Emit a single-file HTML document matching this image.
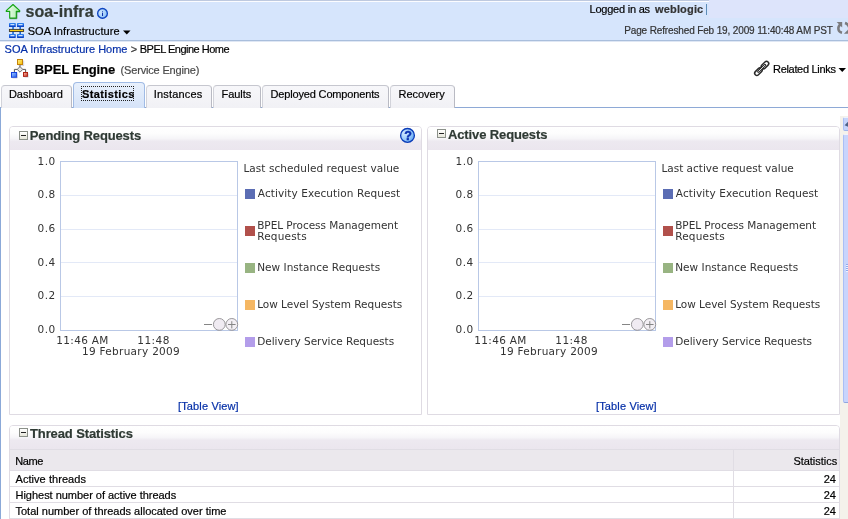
<!DOCTYPE html>
<html lang="en"><head><meta charset="utf-8"><title>BPEL Engine - Statistics</title>
<style>
html,body{margin:0;padding:0;background:#fff;}
body{width:848px;height:519px;overflow:hidden;position:relative;font:11px "Liberation Sans",sans-serif;}
.t{position:absolute;white-space:pre;-webkit-text-stroke:0.2px;}
#txt{position:absolute;left:0;top:0;width:848px;height:519px;will-change:transform;}
.abs{position:absolute;}
#hdr{left:0;top:0;width:848px;height:40px;background:#d6e5fc;border-bottom:1px solid #a9bedc;}
#hdrtop{left:0;top:0;width:709px;height:1px;background:#bec9df;}
#hdrtop2{left:0;top:1px;width:709px;height:1px;background:#fbfcff;}
#login{left:709px;top:0;width:139px;height:18px;background:#dde4fb;}
#hdrsh{left:0;top:41px;width:848px;height:1px;background:#dfe7f4;}
#vbar{left:706px;top:4px;width:1px;height:11px;background:#5d8db8;}
.tab{position:absolute;top:85px;height:23px;box-sizing:border-box;border:1px solid #c6c7cf;border-left-color:#d2d3da;border-right-color:#b9bac3;border-bottom:none;border-radius:4px 4px 0 0;background:linear-gradient(#f7f7fa,#f1f1f5);}
.tab.sel{top:82px;height:26px;border-color:#a0bbe5;background:linear-gradient(#e8f0fc,#d5e3f8);}
#tabline{left:0;top:107px;width:848px;height:1px;background:#8ea9d6;}
#leftline{left:0;top:107px;width:1px;height:412px;background:#8ba9d8;}
#focus{left:81px;top:86px;width:51px;height:13px;border:1px dotted #222;box-sizing:content-box;}
.panel{position:absolute;box-sizing:border-box;border:1px solid #dfdbe3;border-radius:4px 4px 0 0;background:#fff;}
.phdr{position:absolute;left:0;top:0;right:0;height:23px;border-radius:3px 3px 0 0;background:linear-gradient(#ffffff 0%,#fdfdfd 28%,#f6f5f8 50%,#ede9f0 62%,#ebe6ee 100%);}
.disc{position:absolute;width:9px;height:9px;box-sizing:border-box;border:1px solid #8b9089;background:linear-gradient(#fff,#e6e6da);}
.disc:after{content:"";position:absolute;left:1px;top:3px;width:5px;height:1px;background:#222;}
#thead{left:10px;top:450px;width:829px;height:20px;background:#ebe8ed;}
.hl{position:absolute;left:10px;width:829px;height:1px;background:#e0dde4;}
#colsep{left:733px;top:450px;width:1px;height:69px;background:#e0dde4;}
#sbtrack{left:840px;top:116px;width:8px;height:403px;background:#f4f2eb;}
#sbbtn{left:843px;top:117px;width:8px;height:14px;background:#c5d4fb;border-left:1px solid #a9bff5;border-top:1px solid #eef2fe;border-bottom:1px solid #9fb4ea;border-radius:2px 0 0 2px;box-sizing:border-box;}
#sbthumb{left:843px;top:134px;width:8px;height:269px;background:#c8d5fc;border-left:1px solid #a9bff5;border-top:1px solid #eef2fe;border-bottom:1px solid #8fa6e0;border-radius:2px 0 0 2px;box-sizing:border-box;}

</style></head>
<body>
<div class="abs" id="hdr"></div>
<div class="abs" id="hdrtop"></div>
<div class="abs" id="hdrtop2"></div>
<div class="abs" id="login"></div>
<div class="abs" id="hdrsh"></div>
<div class="abs" id="vbar"></div>

<div class="abs" id="tabline"></div>
<div class="abs" id="leftline"></div>
<div class="tab" style="left:1px;width:71px"></div>
<div class="tab sel" style="left:73px;width:72px"></div>
<div class="tab" style="left:146px;width:66px"></div>
<div class="tab" style="left:213px;width:48px"></div>
<div class="tab" style="left:262px;width:127px"></div>
<div class="tab" style="left:390px;width:65px"></div>
<div class="abs" id="focus"></div>

<div class="panel" style="left:9px;top:126px;width:413px;height:289px"><div class="phdr"></div><div class="disc" style="left:9px;top:4px"></div></div>
<div class="panel" style="left:427px;top:126px;width:413px;height:289px"><div class="phdr"></div><div class="disc" style="left:9px;top:2px"></div></div>
<div class="panel" style="left:9px;top:425px;width:831px;height:100px"><div class="phdr"></div><div class="disc" style="left:9px;top:2px"></div></div>
<div class="abs" id="thead"></div>
<div class="hl" style="top:449px"></div>
<div class="hl" style="top:470px"></div>
<div class="hl" style="top:486px"></div>
<div class="hl" style="top:502px"></div>
<div class="hl" style="top:518px"></div>
<div class="abs" id="colsep"></div>

<div class="abs" id="sbtrack"></div>
<div class="abs" id="sbbtn"></div>
<div class="abs" id="sbthumb"></div>

<svg class="abs" style="left:0;top:0;will-change:transform" width="848" height="519" viewBox="0 0 848 519">
<defs>
<linearGradient id="gArrow" x1="0" y1="0" x2="1" y2="0"><stop offset="0" stop-color="#f2fff2"/><stop offset="1" stop-color="#a8eaa8"/></linearGradient>
<radialGradient id="gInfo" cx="0.35" cy="0.4" r="0.8"><stop offset="0" stop-color="#d2e8fd"/><stop offset="1" stop-color="#7cbaf7"/></radialGradient>
<radialGradient id="gHelp" cx="0.3" cy="0.35" r="0.85"><stop offset="0" stop-color="#d2e8fd"/><stop offset="0.6" stop-color="#8fc4f9"/><stop offset="1" stop-color="#4f9af0"/></radialGradient>
<linearGradient id="gBox" x1="0" y1="0" x2="0" y2="1"><stop offset="0" stop-color="#2f84ee"/><stop offset="0.55" stop-color="#1a62e0"/><stop offset="1" stop-color="#0838c0"/></linearGradient>
<linearGradient id="gYel" x1="0" y1="0" x2="1" y2="1"><stop offset="0" stop-color="#fff08a"/><stop offset="1" stop-color="#f7bd00"/></linearGradient>
<linearGradient id="gBlu" x1="0" y1="0" x2="1" y2="1"><stop offset="0" stop-color="#a4ccff"/><stop offset="1" stop-color="#1f5cf0"/></linearGradient>
<linearGradient id="gRed" x1="0" y1="0" x2="1" y2="1"><stop offset="0" stop-color="#fbc0b0"/><stop offset="1" stop-color="#c42c1c"/></linearGradient>
<g id="chart">
  <rect x="60.5" y="161.5" width="177" height="169" fill="#fff" stroke="#b9c8e6" stroke-width="1"/>
  <path d="M61 195.5H237M61 229.5H237M61 262.5H237M61 296.5H237" stroke="#e3e9f7" stroke-width="1" fill="none"/>
  <path d="M204 324.5H212" stroke="#858585" stroke-width="1"/>
  <circle cx="219.3" cy="324.4" r="5.9" fill="#f0ebf2" stroke="#8e8c90" stroke-width="0.9"/>
  <circle cx="231.8" cy="324.4" r="5.9" fill="#f3eff4" stroke="#8e8c90" stroke-width="0.9"/>
  <path d="M228 324.5H235.6M231.8 321.2V328.4" stroke="#858585" stroke-width="1"/>
  <rect x="245" y="189" width="10" height="10" fill="#5b6db4"/>
  <rect x="245" y="226" width="10" height="10" fill="#b1504b"/>
  <rect x="245" y="263" width="10" height="10" fill="#98b482"/>
  <rect x="245" y="300" width="10" height="10" fill="#f5b763"/>
  <rect x="245" y="337" width="10" height="10" fill="#b39dea"/>
</g>
</defs>
<use href="#chart"/>
<use href="#chart" x="418"/>

<!-- green up arrow -->
<path d="M13 4.5 L19.7 10.6 L19.7 11.4 L16.3 11.4 L16.3 18.1 L9.7 18.1 L9.7 11.4 L6.3 11.4 L6.3 10.6 Z" fill="url(#gArrow)" stroke="#14a414" stroke-width="1.15" stroke-linejoin="round"/>
<path d="M16.95 11.9 V18.75 H9.6 M17 12.05 H20" fill="none" stroke="#0a6e0a" stroke-width="0.7" opacity="0.7"/>
<!-- info icon -->
<circle cx="102.5" cy="13.4" r="4.85" fill="url(#gInfo)" stroke="#0d44c0" stroke-width="1.35"/>
<text x="102.5" y="15.9" text-anchor="middle" font-family="Liberation Sans, sans-serif" font-weight="700" font-size="7.4" fill="#0a2fa8">i</text>
<rect x="101.2" y="11.85" width="2.6" height="0.8" fill="#b9d9fb"/>
<!-- soa infra icon -->
<g>
<path d="M13.05 26.5V34.5M20.2 26.5V34.5" stroke="#1a6ad8" stroke-width="1.6"/>
<rect x="9" y="23.1" width="6.8" height="3.9" rx="0.6" fill="url(#gBox)"/>
<rect x="17" y="23.1" width="7" height="3.9" rx="0.6" fill="url(#gBox)"/>
<rect x="9" y="34" width="6.8" height="3.9" rx="0.6" fill="url(#gBox)"/>
<rect x="17" y="34" width="7" height="3.9" rx="0.6" fill="url(#gBox)"/>
<path d="M10.4 24.7H14.4M18.4 24.7H22.6M10.4 35.6H14.4M18.4 35.6H22.6" stroke="#cfe2fc" stroke-width="1.3"/>
<rect x="9.4" y="29.4" width="14.2" height="2.1" fill="#fad21e" stroke="#3a3830" stroke-width="0.9"/>
</g>
<!-- dropdown arrows -->
<path d="M123 30.5H130.5L126.75 34.5Z" fill="#000"/>
<path d="M838.5 68H846L842.25 72Z" fill="#000"/>
<!-- refresh icon -->
<g fill="none" stroke="#7b7b7e" stroke-width="2.5">
<path d="M840.6 24.2 C837.2 27 837.6 31.6 842 32.7"/>
<path d="M845 23 C848 24 850 27 849 30"/>
</g>
<path d="M836.7 22H842.2V27.6Z" fill="#7b7b7e"/>
<path d="M843.9 33.8H849.5V28.2Z" fill="#7b7b7e"/>
<!-- bpel icon -->
<g>
<path d="M20 65V67M17.4 69.4H14.4V72M22.6 69.4H25.6V72" stroke="#5a5a5a" stroke-width="1" fill="none"/>
<path d="M20 66.6L22.8 69.4L20 72.2L17.2 69.4Z" fill="#e6e6e6" stroke="#606060" stroke-width="0.9"/>
<rect x="17.5" y="59.5" width="5" height="5" fill="url(#gYel)" stroke="#c58208" stroke-width="1"/>
<rect x="11.5" y="72.5" width="5.1" height="4.8" fill="url(#gBlu)" stroke="#1443e0" stroke-width="1"/>
<rect x="23.5" y="72.5" width="4" height="3.9" fill="url(#gRed)" stroke="#b02414" stroke-width="1"/>
<path d="M23.7 60.5V65.6H18.5M17.3 73.5V78H12.5M28.2 73.5V77.1H24.5" stroke="#8a8aa0" stroke-width="0.6" fill="none" opacity="0.6"/>
</g>
<!-- chain icon -->
<g transform="translate(761.7 68.4) rotate(-45)">
<rect x="-9" y="-2.2" width="8.7" height="4.4" rx="2.2" fill="#fdfdfd" stroke="#2a2a2a" stroke-width="1.5"/>
<rect x="0.3" y="-2.2" width="8.7" height="4.4" rx="2.2" fill="#fdfdfd" stroke="#2a2a2a" stroke-width="1.5"/>
<path d="M-4.6 0H4.6" stroke="#2a2a2a" stroke-width="2.5" stroke-linecap="round"/>
<path d="M-4.3 0H4.3" stroke="#fafafa" stroke-width="0.9" stroke-linecap="round"/>
</g>
<!-- help icon -->
<circle cx="407.5" cy="135.4" r="6.9" fill="url(#gHelp)" stroke="#0a3cb8" stroke-width="1.3"/>
<text x="408" y="140" text-anchor="middle" font-family="Liberation Sans, sans-serif" font-weight="700" font-size="12.5" fill="#0a30b0" stroke="#0a30b0" stroke-width="0.45">?</text>
<!-- scrollbar grip + arrow -->
<path d="M846 264.5H848M846 266.5H848M846 268.5H848M846 270.5H848" stroke="#8fabee" stroke-width="1"/>
<path d="M846 265.5H848M846 267.5H848M846 269.5H848M846 271.5H848" stroke="#eef3ff" stroke-width="1"/>
<path d="M844.6 125.2L848 121.8L848 126.8Z" fill="#4d6185"/>
</svg>

<div id="txt">
<span class="t" style="left:25.6px;top:1.50px;font:700 16px 'Liberation Sans', sans-serif;line-height:19px;color:#333b36;letter-spacing:0.047px;">soa-infra</span>
<span class="t" style="left:27.7px;top:24.00px;font:400 11px 'Liberation Sans', sans-serif;line-height:14px;color:#000;letter-spacing:0.084px;">SOA Infrastructure</span>
<span class="t" style="left:589.5px;top:2.00px;font:400 11px 'Liberation Sans', sans-serif;line-height:14px;color:#000;letter-spacing:-0.225px;">Logged in as</span>
<span class="t" style="left:655.0px;top:2.00px;font:700 11px 'Liberation Sans', sans-serif;line-height:14px;color:#333;letter-spacing:0.167px;">weblogic</span>
<span class="t" style="left:624.2px;top:24.40px;font:400 10px 'Liberation Sans', sans-serif;line-height:13px;color:#333;letter-spacing:-0.135px;">Page Refreshed Feb 19, 2009 11:40:48 AM PST</span>
<span class="t" style="left:4.6px;top:42.00px;font:400 11px 'Liberation Sans', sans-serif;line-height:14px;color:#0630a8;">SOA Infrastructure Home</span>
<span class="t" style="left:130.8px;top:42.00px;font:400 11px 'Liberation Sans', sans-serif;line-height:14px;color:#333;">&gt;</span>
<span class="t" style="left:139.8px;top:42.00px;font:400 11px 'Liberation Sans', sans-serif;line-height:14px;color:#000;letter-spacing:-0.515px;">BPEL Engine Home</span>
<span class="t" style="left:34.8px;top:62.30px;font:700 13px 'Liberation Sans', sans-serif;line-height:16px;color:#000;letter-spacing:-0.099px;">BPEL Engine</span>
<span class="t" style="left:120.6px;top:63.30px;font:400 11px 'Liberation Sans', sans-serif;line-height:14px;color:#4a4a4a;letter-spacing:-0.171px;">(Service Engine)</span>
<span class="t" style="left:773.0px;top:62.00px;font:400 11px 'Liberation Sans', sans-serif;line-height:14px;color:#000;letter-spacing:-0.312px;">Related Links</span>
<span class="t" style="left:8.9px;top:87.00px;font:400 11px 'Liberation Sans', sans-serif;line-height:14px;color:#000;letter-spacing:0.008px;">Dashboard</span>
<span class="t" style="left:82.0px;top:87.00px;font:700 11px 'Liberation Sans', sans-serif;line-height:14px;color:#000;letter-spacing:0.388px;">Statistics</span>
<span class="t" style="left:153.8px;top:87.00px;font:400 11px 'Liberation Sans', sans-serif;line-height:14px;color:#000;letter-spacing:0.167px;">Instances</span>
<span class="t" style="left:221.5px;top:87.00px;font:400 11px 'Liberation Sans', sans-serif;line-height:14px;color:#000;letter-spacing:-0.045px;">Faults</span>
<span class="t" style="left:270.5px;top:87.00px;font:400 11px 'Liberation Sans', sans-serif;line-height:14px;color:#000;letter-spacing:-0.158px;">Deployed Components</span>
<span class="t" style="left:398.5px;top:87.00px;font:400 11px 'Liberation Sans', sans-serif;line-height:14px;color:#000;letter-spacing:-0.046px;">Recovery</span>
<span class="t" style="left:29.8px;top:128.00px;font:700 13px 'Liberation Sans', sans-serif;line-height:16px;color:#2f3a34;letter-spacing:-0.139px;">Pending Requests</span>
<span class="t" style="left:448.0px;top:127.00px;font:700 13px 'Liberation Sans', sans-serif;line-height:16px;color:#2f3a34;letter-spacing:-0.124px;">Active Requests</span>
<span class="t" style="left:30.0px;top:426.00px;font:700 13px 'Liberation Sans', sans-serif;line-height:16px;color:#2f3a34;letter-spacing:-0.116px;">Thread Statistics</span>
<span class="t" style="left:37.4px;top:154.60px;font:400 10.5px 'DejaVu Sans', 'Liberation Sans', sans-serif;line-height:13.5px;color:#333;letter-spacing:0.566px;-webkit-text-stroke:0;">1.0</span>
<span class="t" style="left:37.4px;top:188.25px;font:400 10.5px 'DejaVu Sans', 'Liberation Sans', sans-serif;line-height:13.5px;color:#333;letter-spacing:0.566px;-webkit-text-stroke:0;">0.8</span>
<span class="t" style="left:37.4px;top:221.90px;font:400 10.5px 'DejaVu Sans', 'Liberation Sans', sans-serif;line-height:13.5px;color:#333;letter-spacing:0.566px;-webkit-text-stroke:0;">0.6</span>
<span class="t" style="left:37.4px;top:255.55px;font:400 10.5px 'DejaVu Sans', 'Liberation Sans', sans-serif;line-height:13.5px;color:#333;letter-spacing:0.566px;-webkit-text-stroke:0;">0.4</span>
<span class="t" style="left:37.4px;top:289.20px;font:400 10.5px 'DejaVu Sans', 'Liberation Sans', sans-serif;line-height:13.5px;color:#333;letter-spacing:0.566px;-webkit-text-stroke:0;">0.2</span>
<span class="t" style="left:37.4px;top:322.85px;font:400 10.5px 'DejaVu Sans', 'Liberation Sans', sans-serif;line-height:13.5px;color:#333;letter-spacing:0.566px;-webkit-text-stroke:0;">0.0</span>
<span class="t" style="left:56.3px;top:333.80px;font:400 10.5px 'DejaVu Sans', 'Liberation Sans', sans-serif;line-height:13.5px;color:#333;letter-spacing:0.320px;-webkit-text-stroke:0;">11:46 AM</span>
<span class="t" style="left:137.3px;top:333.80px;font:400 10.5px 'DejaVu Sans', 'Liberation Sans', sans-serif;line-height:13.5px;color:#333;letter-spacing:0.447px;-webkit-text-stroke:0;">11:48</span>
<span class="t" style="left:81.9px;top:344.70px;font:400 10.5px 'DejaVu Sans', 'Liberation Sans', sans-serif;line-height:13.5px;color:#333;letter-spacing:0.306px;-webkit-text-stroke:0;">19 February 2009</span>
<span class="t" style="left:243.4px;top:162.00px;font:400 10.5px 'DejaVu Sans', 'Liberation Sans', sans-serif;line-height:13.5px;color:#333;letter-spacing:0.064px;-webkit-text-stroke:0;">Last scheduled request value</span>
<span class="t" style="left:257.8px;top:186.70px;font:400 10.5px 'DejaVu Sans', 'Liberation Sans', sans-serif;line-height:13.5px;color:#333;letter-spacing:0.091px;-webkit-text-stroke:0;">Activity Execution Request</span>
<span class="t" style="left:257.2px;top:219.00px;font:400 10.5px 'DejaVu Sans', 'Liberation Sans', sans-serif;line-height:13.5px;color:#333;letter-spacing:-0.035px;-webkit-text-stroke:0;">BPEL Process Management</span>
<span class="t" style="left:257.2px;top:229.70px;font:400 10.5px 'DejaVu Sans', 'Liberation Sans', sans-serif;line-height:13.5px;color:#333;letter-spacing:0.184px;-webkit-text-stroke:0;">Requests</span>
<span class="t" style="left:257.2px;top:261.00px;font:400 10.5px 'DejaVu Sans', 'Liberation Sans', sans-serif;line-height:13.5px;color:#333;letter-spacing:0.030px;-webkit-text-stroke:0;">New Instance Requests</span>
<span class="t" style="left:257.2px;top:298.30px;font:400 10.5px 'DejaVu Sans', 'Liberation Sans', sans-serif;line-height:13.5px;color:#333;letter-spacing:-0.028px;-webkit-text-stroke:0;">Low Level System Requests</span>
<span class="t" style="left:257.2px;top:335.00px;font:400 10.5px 'DejaVu Sans', 'Liberation Sans', sans-serif;line-height:13.5px;color:#333;letter-spacing:-0.011px;-webkit-text-stroke:0;">Delivery Service Requests</span>
<span class="t" style="left:178.0px;top:398.50px;font:400 11px 'Liberation Sans', sans-serif;line-height:14px;color:#0630a8;letter-spacing:0.141px;">[Table View]</span>
<span class="t" style="left:455.4px;top:154.60px;font:400 10.5px 'DejaVu Sans', 'Liberation Sans', sans-serif;line-height:13.5px;color:#333;letter-spacing:0.566px;-webkit-text-stroke:0;">1.0</span>
<span class="t" style="left:455.4px;top:188.25px;font:400 10.5px 'DejaVu Sans', 'Liberation Sans', sans-serif;line-height:13.5px;color:#333;letter-spacing:0.566px;-webkit-text-stroke:0;">0.8</span>
<span class="t" style="left:455.4px;top:221.90px;font:400 10.5px 'DejaVu Sans', 'Liberation Sans', sans-serif;line-height:13.5px;color:#333;letter-spacing:0.566px;-webkit-text-stroke:0;">0.6</span>
<span class="t" style="left:455.4px;top:255.55px;font:400 10.5px 'DejaVu Sans', 'Liberation Sans', sans-serif;line-height:13.5px;color:#333;letter-spacing:0.566px;-webkit-text-stroke:0;">0.4</span>
<span class="t" style="left:455.4px;top:289.20px;font:400 10.5px 'DejaVu Sans', 'Liberation Sans', sans-serif;line-height:13.5px;color:#333;letter-spacing:0.566px;-webkit-text-stroke:0;">0.2</span>
<span class="t" style="left:455.4px;top:322.85px;font:400 10.5px 'DejaVu Sans', 'Liberation Sans', sans-serif;line-height:13.5px;color:#333;letter-spacing:0.566px;-webkit-text-stroke:0;">0.0</span>
<span class="t" style="left:474.3px;top:333.80px;font:400 10.5px 'DejaVu Sans', 'Liberation Sans', sans-serif;line-height:13.5px;color:#333;letter-spacing:0.320px;-webkit-text-stroke:0;">11:46 AM</span>
<span class="t" style="left:555.3px;top:333.80px;font:400 10.5px 'DejaVu Sans', 'Liberation Sans', sans-serif;line-height:13.5px;color:#333;letter-spacing:0.447px;-webkit-text-stroke:0;">11:48</span>
<span class="t" style="left:499.9px;top:344.70px;font:400 10.5px 'DejaVu Sans', 'Liberation Sans', sans-serif;line-height:13.5px;color:#333;letter-spacing:0.306px;-webkit-text-stroke:0;">19 February 2009</span>
<span class="t" style="left:661.4px;top:162.00px;font:400 10.5px 'DejaVu Sans', 'Liberation Sans', sans-serif;line-height:13.5px;color:#333;-webkit-text-stroke:0;">Last active request value</span>
<span class="t" style="left:675.8px;top:186.70px;font:400 10.5px 'DejaVu Sans', 'Liberation Sans', sans-serif;line-height:13.5px;color:#333;letter-spacing:0.091px;-webkit-text-stroke:0;">Activity Execution Request</span>
<span class="t" style="left:675.2px;top:219.00px;font:400 10.5px 'DejaVu Sans', 'Liberation Sans', sans-serif;line-height:13.5px;color:#333;letter-spacing:-0.035px;-webkit-text-stroke:0;">BPEL Process Management</span>
<span class="t" style="left:675.2px;top:229.70px;font:400 10.5px 'DejaVu Sans', 'Liberation Sans', sans-serif;line-height:13.5px;color:#333;letter-spacing:0.184px;-webkit-text-stroke:0;">Requests</span>
<span class="t" style="left:675.2px;top:261.00px;font:400 10.5px 'DejaVu Sans', 'Liberation Sans', sans-serif;line-height:13.5px;color:#333;letter-spacing:0.030px;-webkit-text-stroke:0;">New Instance Requests</span>
<span class="t" style="left:675.2px;top:298.30px;font:400 10.5px 'DejaVu Sans', 'Liberation Sans', sans-serif;line-height:13.5px;color:#333;letter-spacing:-0.028px;-webkit-text-stroke:0;">Low Level System Requests</span>
<span class="t" style="left:675.2px;top:335.00px;font:400 10.5px 'DejaVu Sans', 'Liberation Sans', sans-serif;line-height:13.5px;color:#333;letter-spacing:-0.012px;-webkit-text-stroke:0;">Delivery Service Requests</span>
<span class="t" style="left:596.0px;top:398.50px;font:400 11px 'Liberation Sans', sans-serif;line-height:14px;color:#0630a8;letter-spacing:0.141px;">[Table View]</span>
<span class="t" style="left:15.3px;top:454.00px;font:400 11px 'Liberation Sans', sans-serif;line-height:14px;color:#000;letter-spacing:-0.411px;">Name</span>
<span class="t" style="left:793.4px;top:454.00px;font:400 11px 'Liberation Sans', sans-serif;line-height:14px;color:#000;letter-spacing:-0.022px;">Statistics</span>
<span class="t" style="left:15.5px;top:472.00px;font:400 11px 'Liberation Sans', sans-serif;line-height:14px;color:#000;letter-spacing:0.057px;">Active threads</span>
<span class="t" style="left:15.5px;top:488.00px;font:400 11px 'Liberation Sans', sans-serif;line-height:14px;color:#000;letter-spacing:-0.023px;">Highest number of active threads</span>
<span class="t" style="left:15.5px;top:504.00px;font:400 11px 'Liberation Sans', sans-serif;line-height:14px;color:#000;">Total number of threads allocated over time</span>
<span class="t" style="left:823.8px;top:472.00px;font:400 11px 'Liberation Sans', sans-serif;line-height:14px;color:#000;letter-spacing:-0.125px;">24</span>
<span class="t" style="left:823.8px;top:488.00px;font:400 11px 'Liberation Sans', sans-serif;line-height:14px;color:#000;letter-spacing:-0.125px;">24</span>
<span class="t" style="left:823.8px;top:504.00px;font:400 11px 'Liberation Sans', sans-serif;line-height:14px;color:#000;letter-spacing:-0.125px;">24</span>
</div>
</body></html>
